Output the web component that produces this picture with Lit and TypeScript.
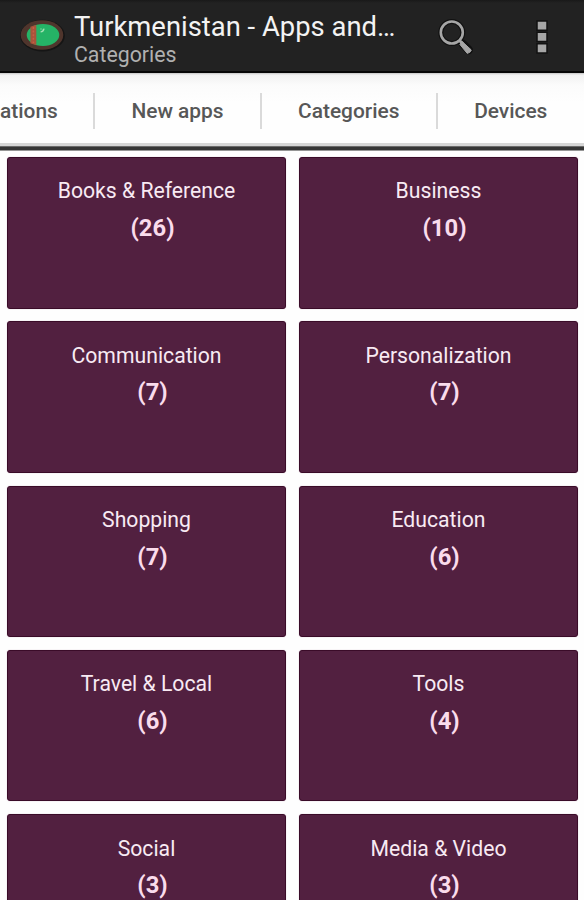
import { LitElement, html, css } from "lit";
import { customElement, property } from "lit/decorators.js";

const CATEGORIES: [string, number][] = [
  ["Books & Reference", 26],
  ["Business", 10],
  ["Communication", 7],
  ["Personalization", 7],
  ["Shopping", 7],
  ["Education", 6],
  ["Travel & Local", 6],
  ["Tools", 4],
  ["Social", 3],
  ["Media & Video", 3],
];

@customElement("action-bar")
class ActionBar extends LitElement {
  static styles = css`
    :host {
      display: flex;
      height: 73px;
      box-sizing: border-box;
      background: linear-gradient(#191919, #222 3px);
      border-bottom: 2px solid #050505;
    }
    .logo {
      width: 48px;
      height: 36px;
      margin: 17px 8px 0 18px;
      flex: none;
    }
    .titles {
      width: 330px;
      flex: none;
      white-space: nowrap;
    }
    .title {
      font-size: 27.4px;
      line-height: 32px;
      margin-top: 11px;
      color: #f3f3f3;
    }
    .subtitle {
      font-size: 21.3px;
      line-height: 24px;
      color: #b0b0b0;
    }
    .search {
      width: 38px;
      height: 38px;
      margin: 18px 0 0 33px;
    }
    .more {
      width: 12px;
      height: 34px;
      margin: 20px 0 0 60.5px;
    }
  `;

  render() {
    return html`
      <svg class="logo" viewBox="0 0 48 36">
        <ellipse cx="24.5" cy="18.6" rx="22.4" ry="15.8" fill="#151515" />
        <ellipse cx="24" cy="18" rx="21.3" ry="14.8" fill="#4f352c" />
        <ellipse cx="25" cy="18" rx="16.3" ry="11" fill="#25b366" />
        <path d="M12.4 9.8Q15 8.6 18.3 8V28Q15 27.4 12.4 26.2Z" fill="#a9533b" />
        <path d="M15.4 10v16" stroke="#c46044" stroke-width="1.6" stroke-dasharray="2 1.6" />
        <path d="M26 11.6q-.4 3-3.4 3.2" fill="none" stroke="#a5e0b4" stroke-width="1.3" />
        <path d="M22.4 12h1.2M24.4 13.1h1" stroke="#a5e0b4" />
      </svg>
      <div class="titles">
        <div class="title">Turkmenistan - Apps and…</div>
        <div class="subtitle">Categories</div>
      </div>
      <svg class="search" viewBox="0 0 38 38">
        <circle cx="14.8" cy="14.5" r="11" fill="none" stroke="#111" stroke-width="5" />
        <path d="M22.5 22.5l3 3" stroke="#111" stroke-width="6" />
        <path d="M26 26l5.8 6" stroke="#111" stroke-width="8.4" stroke-linecap="round" />
        <circle cx="14.8" cy="14.5" r="11" fill="none" stroke="#a6a6a6" stroke-width="2.6" />
        <path d="M22 22l4 4" stroke="#a6a6a6" stroke-width="3" />
        <path d="M25.2 23.6L34.3 32Q33.4 35 30.2 35.4L22.9 26.4Z" fill="#a6a6a6" stroke="#a6a6a6" stroke-linejoin="round" />
      </svg>
      <svg class="more" viewBox="0 0 12 34">
        <path d="M1 1h10v9.3H1zM1 12.3h10v9.3H1zM1 23.8h10v9.3H1z"
          fill="#a6a6a6" stroke="#121212" stroke-width="1.5" />
      </svg>
    `;
  }
}

@customElement("tab-strip")
class TabStrip extends LitElement {
  static styles = css`
    :host {
      display: block;
      overflow: hidden;
    }
    .tabs {
      display: grid;
      grid-template-columns: 95px 167px 175.5px 146.5px;
      height: 70px;
      align-items: center;
      background: linear-gradient(#c4c4c4, #f1f1f1 2px, #fbfbfb 12px, #fefefe 30px);
    }
    .tab {
      display: flex;
      align-items: center;
      justify-content: center;
      height: 36px;
      margin-top: 5px;
      box-sizing: border-box;
      font-size: 20.9px;
      font-weight: 500;
      color: #575757;
      white-space: nowrap;
      border-right: 2px solid #dadada;
    }
    .tab:first-child {
      justify-content: flex-start;
    }
    .tab:last-child {
      border-right: 0;
    }
    .rule {
      height: 8px;
      background: linear-gradient(
        #d6d6d6 3px,
        #6a6a6a 3px,
        #6a6a6a 4px,
        #363636 4px,
        #363636 7px,
        #969696 7px
      );
    }
  `;

  render() {
    return html`
      <div class="tabs">
        <div class="tab">ations</div>
        <div class="tab">New apps</div>
        <div class="tab">Categories</div>
        <div class="tab">Devices</div>
      </div>
      <div class="rule"></div>
    `;
  }
}

@customElement("category-card")
class CategoryCard extends LitElement {
  @property() label = "";
  @property({ type: Number }) count = 0;

  static styles = css`
    :host {
      display: block;
      box-sizing: border-box;
      height: 151.6px;
      padding-top: 19.4px;
      text-align: center;
      background: #522040;
      border: 1.5px solid #3a0b28;
      border-radius: 3px;
      box-shadow: 0 0 1px #b595aa;
    }
    .label {
      font-size: 21.2px;
      line-height: 28px;
      color: #f8eaf3;
    }
    .count {
      margin-top: 7.6px;
      padding-left: 12px;
      font-size: 23.8px;
      line-height: 30px;
      font-weight: 700;
      color: #fadcec;
    }
  `;

  render() {
    return html`
      <div class="label">${this.label}</div>
      <div class="count">(${this.count})</div>
    `;
  }
}

@customElement("app-root")
class AppRoot extends LitElement {
  static styles = css`
    :host {
      display: block;
      width: 584px;
      height: 900px;
      overflow: hidden;
      background: #fefefe;
      font-family: Roboto, "Liberation Sans", sans-serif;
    }
    .grid {
      display: grid;
      grid-template-columns: 279px 279px;
      gap: 12.7px 13px;
      padding: 6px 0 0 7px;
    }
  `;

  render() {
    return html`
      <action-bar></action-bar>
      <tab-strip></tab-strip>
      <div class="grid">
        ${CATEGORIES.map(
          ([label, count]) =>
            html`<category-card .label=${label} .count=${count}></category-card>`
        )}
      </div>
    `;
  }
}
